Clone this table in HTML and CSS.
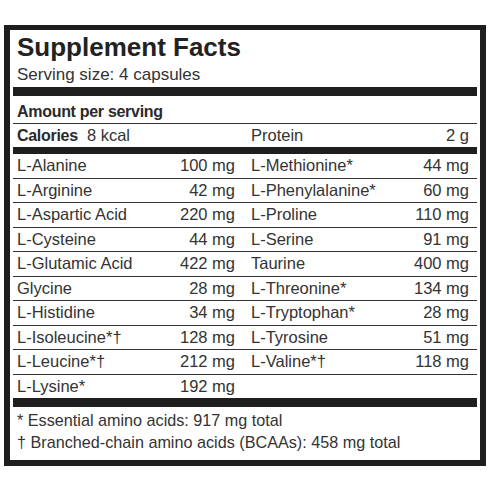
FILE: index.html
```html
<!DOCTYPE html>
<html lang="en">
<head>
  <meta charset="UTF-8" />
  <meta name="viewport" content="width=device-width, initial-scale=1.0"/>
  <title>Supplement Facts</title>
  <link rel="stylesheet" href="styles.css">
</head>
<body>

  <div class="label">
    <h1 class="title">Supplement Facts</h1>
    <p class="serving">Serving size: 4 capsules</p>
    <div class="bar bar-thick"></div>

    <div class="amount">Amount per serving</div>
    <div class="calories">
      <div class="cell cell-left"><span><b>Calories</b>&nbsp; 8 kcal</span></div>
      <div class="cell cell-right"><span>Protein</span><span>2 g</span></div>
    </div>
    <div class="bar bar-mid"></div>

    <div class="facts">
      <div class="col col-left">
        <div class="cell"><span>L-Alanine</span><span>100 mg</span></div>
        <div class="cell"><span>L-Arginine</span><span>42 mg</span></div>
        <div class="cell"><span>L-Aspartic Acid</span><span>220 mg</span></div>
        <div class="cell"><span>L-Cysteine</span><span>44 mg</span></div>
        <div class="cell"><span>L-Glutamic Acid</span><span>422 mg</span></div>
        <div class="cell"><span>Glycine</span><span>28 mg</span></div>
        <div class="cell"><span>L-Histidine</span><span>34 mg</span></div>
        <div class="cell"><span>L-Isoleucine*†</span><span>128 mg</span></div>
        <div class="cell"><span>L-Leucine*†</span><span>212 mg</span></div>
        <div class="cell"><span>L-Lysine*</span><span>192 mg</span></div>
      </div>
      <div class="col col-right">
        <div class="cell"><span>L-Methionine*</span><span>44 mg</span></div>
        <div class="cell"><span>L-Phenylalanine*</span><span>60 mg</span></div>
        <div class="cell"><span>L-Proline</span><span>110 mg</span></div>
        <div class="cell"><span>L-Serine</span><span>91 mg</span></div>
        <div class="cell"><span>Taurine</span><span>400 mg</span></div>
        <div class="cell"><span>L-Threonine*</span><span>134 mg</span></div>
        <div class="cell"><span>L-Tryptophan*</span><span>28 mg</span></div>
        <div class="cell"><span>L-Tyrosine</span><span>51 mg</span></div>
        <div class="cell"><span>L-Valine*†</span><span>118 mg</span></div>
      </div>
    </div>
    <div class="bar bar-thick"></div>

    <div class="notes">
      <p>* Essential amino acids: 917 mg total</p>
      <p>† Branched-chain amino acids (BCAAs): 458 mg total</p>
    </div>
  </div>

</body>
</html>
```

FILE: styles.css
```css
body {
  margin: 0;
  background: #fff;
  font-family: 'Liberation Sans', Arial, sans-serif;
  color: #333;
}

.label {
  box-sizing: border-box;
  width: 482px;
  height: 441px;
  margin: 25px 0 0 4px;
  border: 6px solid #1e1e1e;
  border-top-width: 5px;
  padding: 4px 3px 0;
}

.title {
  margin: 0;
  padding-left: 4px;
  font-size: 26px;
  line-height: 26px;
  font-weight: bold;
  color: #222;
}

.serving {
  margin: 5px 0 0;
  padding-left: 4px;
  font-size: 17px;
  line-height: 20px;
}

.bar {
  background: #1e1e1e;
}

.bar-thick {
  height: 9px;
  margin-top: 2px;
}

.bar-mid {
  height: 7px;
}

.amount {
  padding: 4px 0 0 4px;
  height: 23px;
  line-height: 23px;
  font-weight: bold;
  font-size: 16px;
  letter-spacing: -0.3px;
  color: #2a2a2a;
  border-bottom: 1px solid #333;
}

.calories,
.facts {
  display: grid;
  grid-template-columns: 232px 1fr;
}

.cell {
  display: flex;
  justify-content: space-between;
  height: 23.5px;
  line-height: 23.5px;
  font-size: 16.5px;
  border-bottom: 1px solid #333;
}

.calories .cell {
  height: 23px;
  line-height: 23px;
  border-bottom: none;
}

.calories b {
  font-size: 16px;
  letter-spacing: -0.3px;
  color: #2a2a2a;
}

.cell-left,
.col-left .cell {
  padding: 0 10px 0 4px;
}

.cell-right,
.col-right .cell {
  padding: 0 8px 0 6px;
}

.col-left .cell:last-child {
  border-bottom: none;
}

.facts + .bar-thick {
  margin-top: 0;
}

.notes {
  padding: 2px 0 0 4px;
}

.notes p {
  margin: 0;
  font-size: 16.2px;
  line-height: 22px;
}
```
